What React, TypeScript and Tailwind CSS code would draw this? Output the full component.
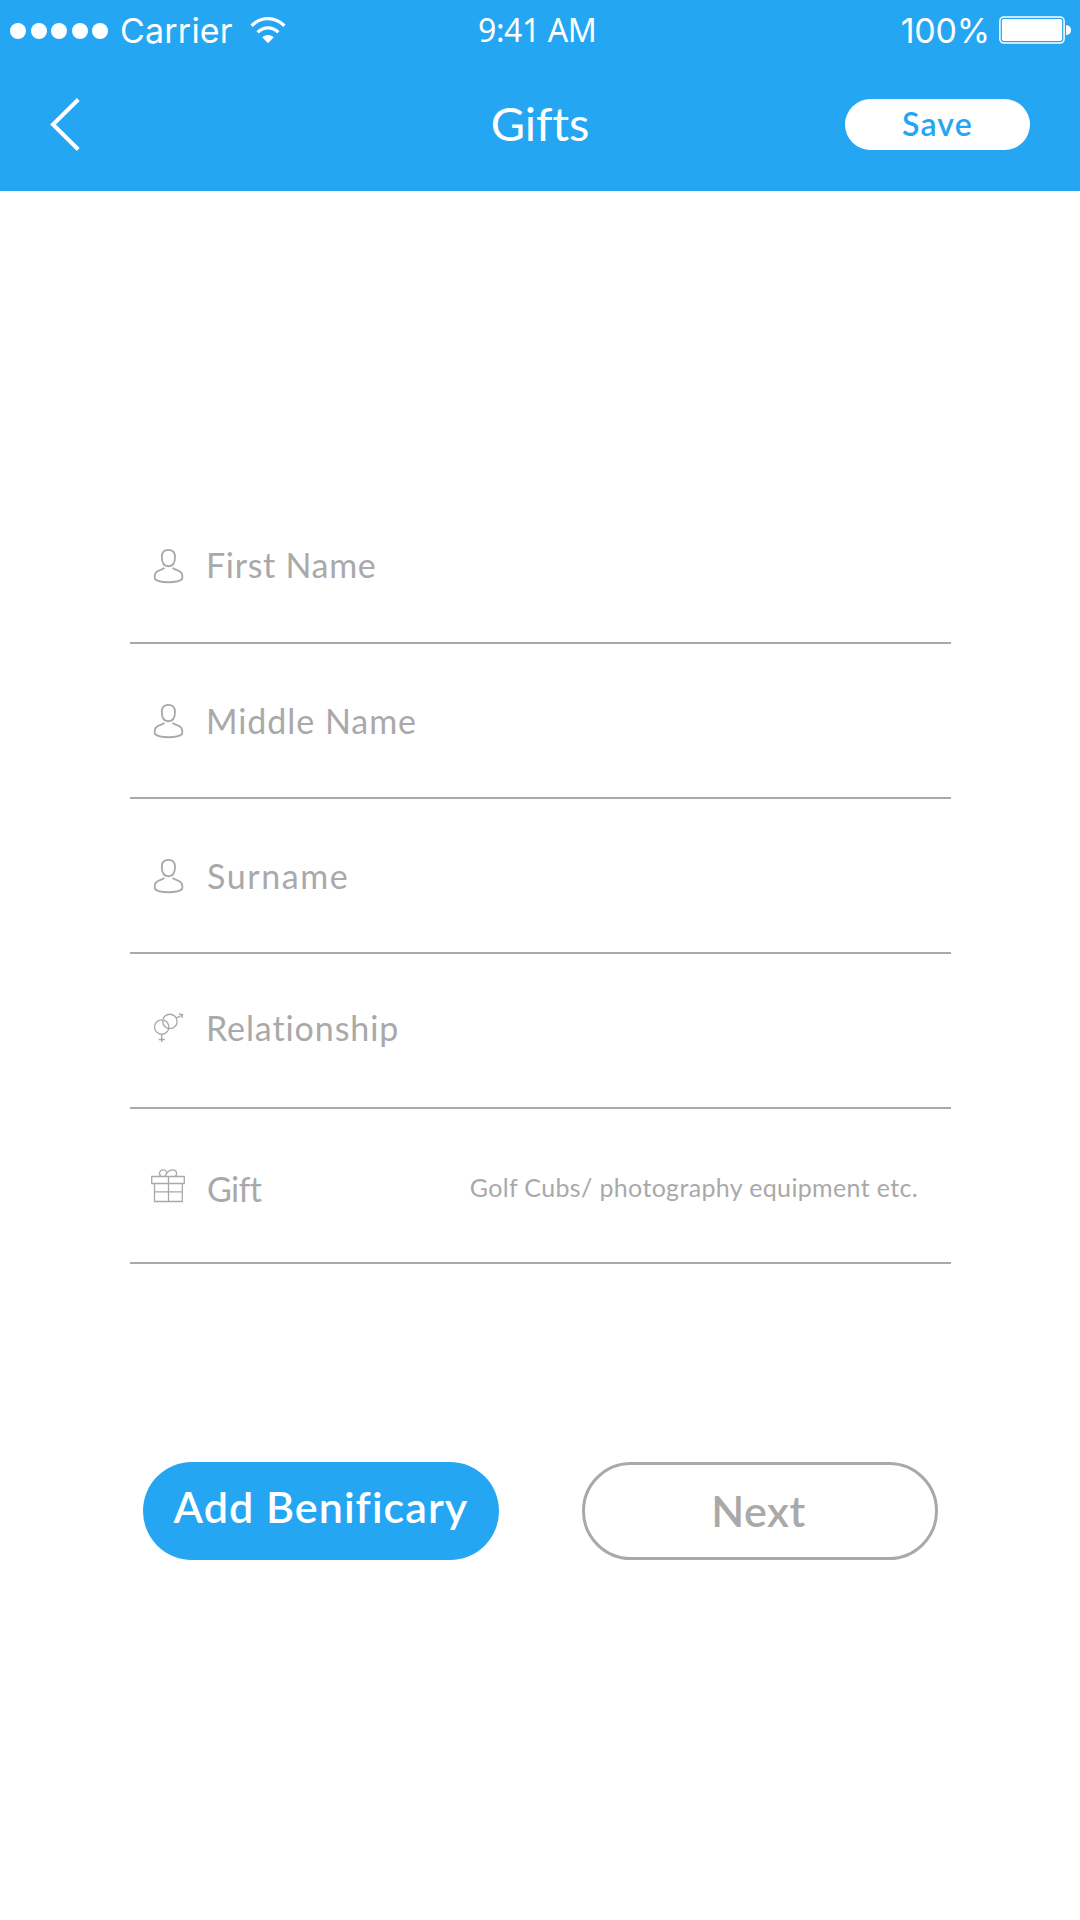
import type { ReactNode } from "react";

function WifiIcon() {
  return (
    <svg className="ml-[17px] h-[27px] w-[36px]" viewBox="0 0 36 27" fill="none" stroke="#fff" strokeWidth="3.3">
      <path d="M1.5 8.8C11.2 -.7 24.8 -.7 34.5 8.8" />
      <path d="M7.6 15.2C13.9 9.5 22.1 9.5 28.4 15.2" />
      <path d="M12.2 20.2C15.8 17.2 20.2 17.2 23.8 20.2L18 26.2Z" fill="#fff" stroke="none" />
    </svg>
  );
}

function BatteryIcon() {
  return (
    <svg className="ml-[9px] h-[28px] w-[72px]" viewBox="0 0 72 28">
      <rect x=".9" y=".9" width="64.2" height="26.2" rx="4" fill="none" stroke="#fff" strokeWidth="1.5" />
      <rect x="2.9" y="2.9" width="60.2" height="22.2" rx="1.8" fill="#fff" />
      <path d="M67 9.3C70 9.3 72 11.3 72 14.2S70 19.1 67 19.1Z" fill="#fff" />
    </svg>
  );
}

function PersonIcon() {
  return (
    <svg className="h-[36px] w-[34px]" viewBox="0 0 34 36" fill="none" stroke="#a9a9aa" strokeWidth="1.85">
      <path d="M17.4 .9C13 .9 10.8 3.4 10.8 8C10.8 13.6 13.2 17.2 17.4 17.2S24 13.6 24 8C24 3.4 21.8 .9 17.4 .9Z" />
      <path d="M13.3 18.8C11.8 21.2 5.2 20.7 4 25.2C3.7 26.8 3.6 28.8 4 30C5.8 31.9 11.4 33.2 17.4 33.2S29.3 31.9 31.1 30C31.5 28.8 31.4 26.8 31 25.2C29.8 20.7 23.2 21.2 21.6 18.8" />
    </svg>
  );
}

function RelationshipIcon() {
  return (
    <svg className="h-[36px] w-[34px]" viewBox="0 0 34 36" fill="none" stroke="#a9a9aa" strokeWidth="1.35">
      <circle cx="10.7" cy="14" r="7.2" />
      <circle cx="18.9" cy="8.4" r="7.2" />
      <path d="M10.7 21.2V29M7.8 26.5H13.8M25.2 5.1L31.2 2M28 .8L31.6 1.8L30.7 5.2" />
    </svg>
  );
}

function GiftIcon() {
  return (
    <svg className="h-[36px] w-[34px]" viewBox="0 0 34 36" fill="none" stroke="#a9a9aa" strokeWidth="1.3">
      <path d="M.7 7.5H33.3V14.5H.7ZM3.5 14.5V32.5H31.3V14.5M17.5 7.5V32.5M3.5 22.9H31.3" />
      <path d="M10.1 7.5C7.2 5.2 8.4 .9 12.2 .9C15.2 .9 16.4 3.2 15.3 5.1C14.7 6.3 13.8 6.8 14 7.5M13.9 7.5C15.4 4.2 18.6 .9 21.8 .9C25.5 .9 26.9 4.9 24.3 7.5" />
    </svg>
  );
}

type FieldProps = {
  icon: ReactNode;
  iconClass: string;
  label: string;
  labelClass: string;
  hint?: string;
};

function Field({ icon, iconClass, label, labelClass, hint }: FieldProps) {
  return (
    <div className="flex h-[155px] items-start border-b-2 border-[#a9a9aa] pl-[21px]">
      <div className={iconClass}>{icon}</div>
      <div className={"text-[34px] leading-[40px] whitespace-nowrap " + labelClass}>{label}</div>
      {hint && (
        <div className="mr-[33px] ml-auto pt-[63px] text-[25px] leading-[30px] tracking-[0.35px] whitespace-nowrap">
          {hint}
        </div>
      )}
    </div>
  );
}

export default function App() {
  return (
    <div className="flex h-[1920px] w-[1080px] flex-col overflow-hidden bg-white font-['Lato',sans-serif] text-[#a9a9aa]">
      <header className="h-[191px] bg-[#24a6f2] text-white">
        <div className="flex h-[60px] items-center pr-[9px] pl-[10px]">
          <div className="flex w-[468px] items-center">
            <div className="flex gap-[4.5px] pt-[2px]">
              {[0, 1, 2, 3, 4].map((i) => (
                <span key={i} className="size-4 rounded-full bg-white" />
              ))}
            </div>
            <span className="ml-[12px] w-[113px] font-['Inter',sans-serif] text-[34px] tracking-[0.2px] whitespace-nowrap">Carrier</span>
            <WifiIcon />
          </div>
          <span className="font-['Noto_Sans',sans-serif] text-[32px] leading-[40px] tracking-[-0.4px]">9:41 AM</span>
          <div className="ml-auto flex items-center">
            <span className="font-['Inter',sans-serif] text-[34px] tracking-[-0.2px]">100%</span>
            <BatteryIcon />
          </div>
        </div>
        <nav className="grid h-[129px] grid-cols-3 items-center pr-[50px] pl-[50px]">
          <svg className="h-[54px] w-[32px]" viewBox="0 0 32 54" fill="none" stroke="#fff" strokeWidth="4">
            <path d="M28.3 1.5L3 26.5L28.3 51.5" />
          </svg>
          <h1 className="pb-[4px] text-center text-[47px] leading-[60px] tracking-[-0.1px] [font-variant-ligatures:none]">Gifts</h1>
          <button className="flex h-[51px] w-[185px] items-center justify-center justify-self-end rounded-full bg-white pb-px text-[32px] font-semibold tracking-[1.2px] text-[#24a6f2]">
            Save
          </button>
        </nav>
      </header>

      <main className="flex flex-col pt-[298px]">
        <div className="mx-[130px] w-[821px]">
          <Field icon={<PersonIcon />} iconClass="pt-[60px]" label="First Name" labelClass="ml-[21px] pt-[56px] tracking-[0.7px]" />
          <Field icon={<PersonIcon />} iconClass="pt-[60px]" label="Middle Name" labelClass="ml-[21px] pt-[57px] tracking-[0.95px]" />
          <Field icon={<PersonIcon />} iconClass="pt-[60px]" label="Surname" labelClass="ml-[22px] pt-[57px] tracking-[1.6px]" />
          <Field icon={<RelationshipIcon />} iconClass="pt-[59px]" label="Relationship" labelClass="ml-[21px] pt-[54px] tracking-[0.9px]" />
          <Field
            icon={<GiftIcon />}
            iconClass="pt-[60px]"
            label="Gift"
            labelClass="ml-[22px] pt-[60px] tracking-[-0.7px]"
            hint="Golf Cubs/ photography equipment etc."
          />
        </div>

        <div className="mt-[198px] flex gap-[83px] pl-[143px] text-[43px] font-semibold">
          <button className="flex h-[98px] w-[356px] items-center justify-center rounded-full bg-[#24a6f2] pb-[8px] tracking-[1.05px] whitespace-nowrap text-white">
            Add Benificary
          </button>
          <button className="flex h-[98px] w-[356px] items-center justify-center rounded-full border-3 border-[#a9a9aa] pr-[3px] tracking-[0.5px]">
            Next
          </button>
        </div>
      </main>
    </div>
  );
}
